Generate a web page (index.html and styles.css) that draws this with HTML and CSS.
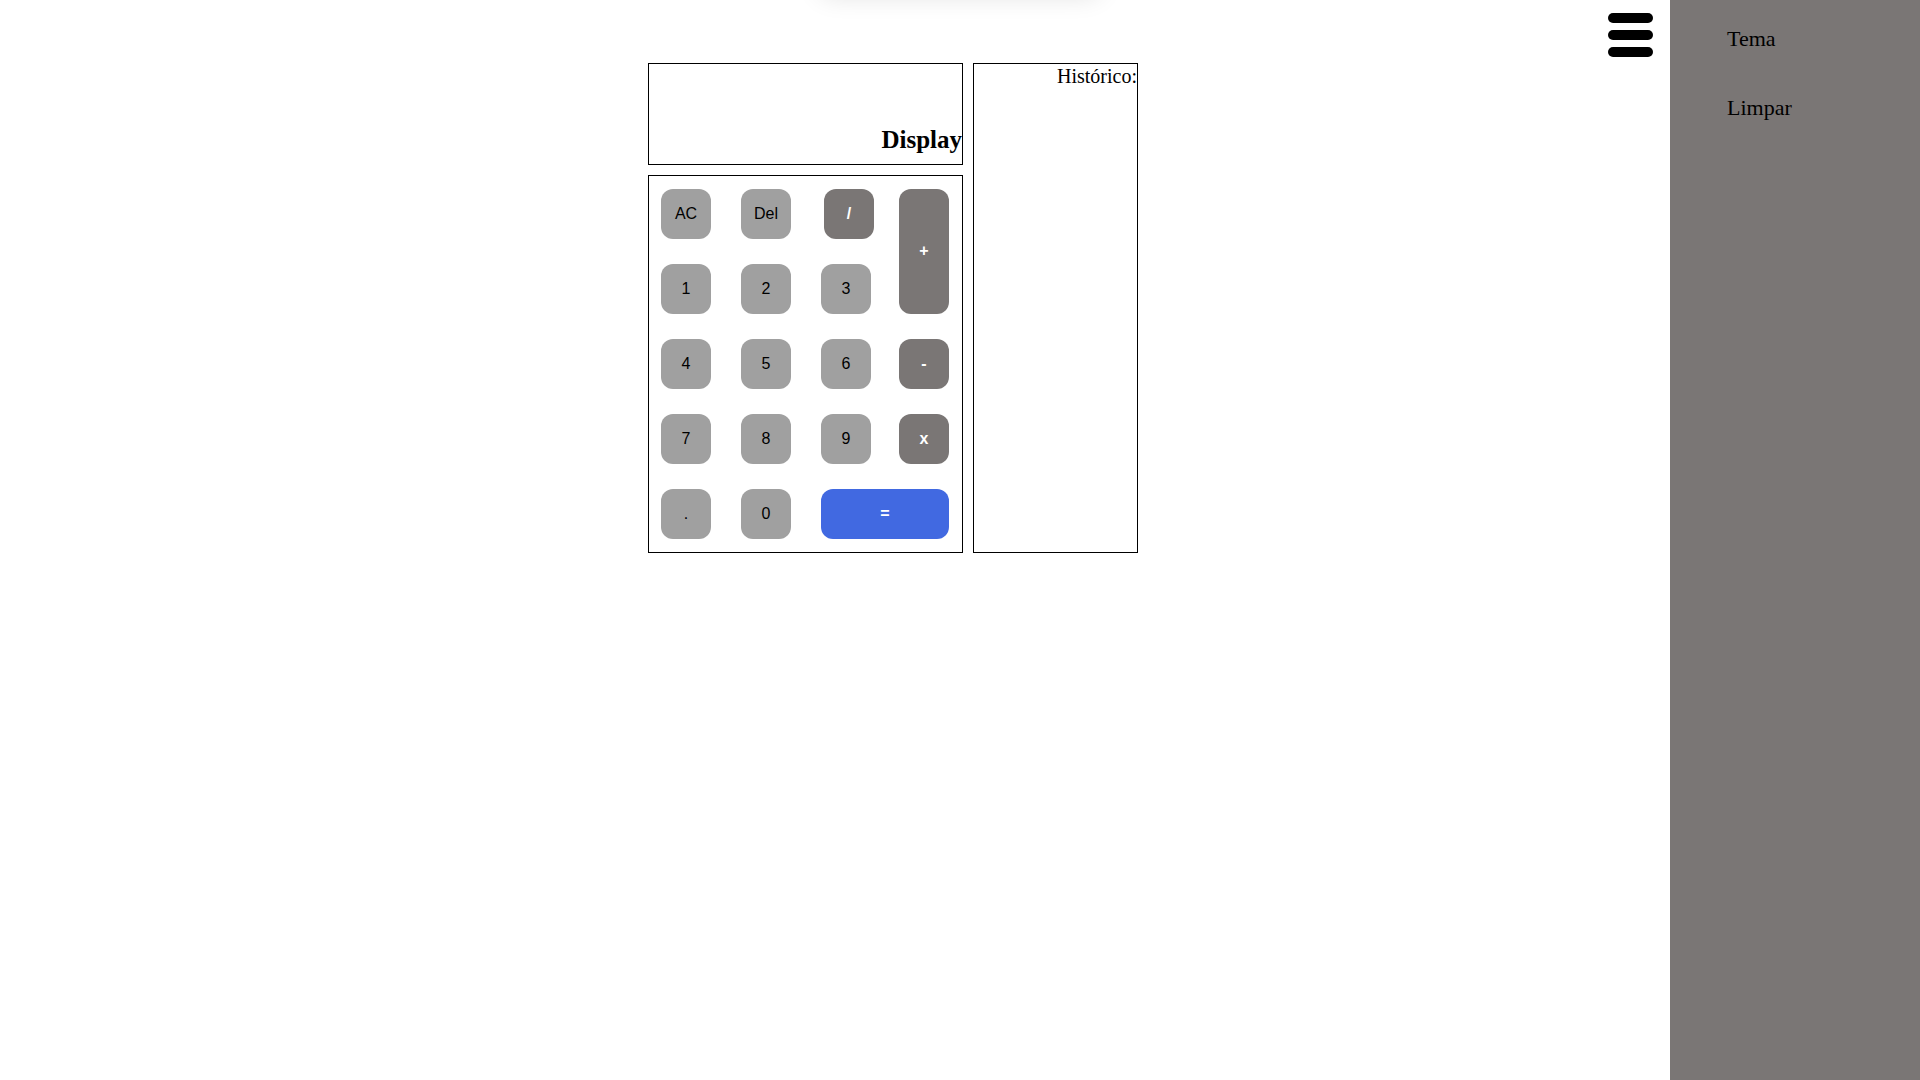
FILE: index.html
```html
<!DOCTYPE html>
<html lang="pt-BR">
  <head>
    <meta charset="UTF-8" />
    <meta name="viewport" content="width=device-width, initial-scale=1.0" />
    <title>Calculadora</title>
    <link rel="stylesheet" href="styles.css">
  </head>
  <body>
    <div class="toast"></div>

    <div class="app">
      <div class="calc">
        <div class="display">Display</div>
        <div class="keypad">
          <button class="key">AC</button>
          <button class="key">Del</button>
          <button class="key op slash">/</button>
          <button class="key op plus">+</button>
          <button class="key">1</button>
          <button class="key">2</button>
          <button class="key">3</button>
          <button class="key">4</button>
          <button class="key">5</button>
          <button class="key">6</button>
          <button class="key op">-</button>
          <button class="key">7</button>
          <button class="key">8</button>
          <button class="key">9</button>
          <button class="key op">x</button>
          <button class="key">.</button>
          <button class="key">0</button>
          <button class="key equals">=</button>
        </div>
      </div>
      <div class="history">Histórico:</div>
    </div>

    <div class="menu-toggle">
      <span></span>
      <span></span>
      <span></span>
    </div>

    <nav class="sidebar">
      <a class="sidebar-item">Tema</a>
      <a class="sidebar-item">Limpar</a>
    </nav>
  </body>
</html>
```

FILE: styles.css
```css
body {
  margin: 0;
  padding: 0;
  background-color: #fff;
  font-family: "Liberation Serif", "Times New Roman", serif;
}

/* aviso escondido acima da tela */
.toast {
  position: fixed;
  top: -60px;
  left: 50%;
  width: 280px;
  height: 56px;
  transform: translateX(-50%);
  background-color: #fff;
  border-radius: 10px;
  box-shadow: 0 0 26px rgba(0, 0, 0, 0.12);
}

.app {
  display: flex;
  gap: 10px;
  margin: 63px 0 0 648px;
}

.calc {
  display: flex;
  flex-direction: column;
  gap: 10px;
}

.display {
  width: 313px;
  height: 91px;
  padding-bottom: 9px;
  border: 1px solid #000;
  display: flex;
  flex-direction: column;
  justify-content: flex-end;
  align-items: flex-end;
  font-size: 25px;
  font-weight: bold;
  line-height: 28.75px;
}

.keypad {
  border: 1px solid #000;
  padding: 13px 13px 13px 12px;
  display: grid;
  grid-template-columns: 80px 80px 78px 50px;
  grid-auto-rows: 50px;
  row-gap: 25px;
}

.key {
  width: 50px;
  height: 50px;
  border: none;
  border-radius: 12px;
  background-color: #a0a0a0;
  color: #000;
  font-family: "Liberation Sans", Arial, sans-serif;
  font-size: 16px;
  padding: 0;
  cursor: pointer;
}

.key.op {
  background-color: #7a7675;
  color: #fff;
  font-weight: bold;
}

.key.slash {
  margin-left: 3px;
}

.key.plus {
  grid-column: 4;
  grid-row: 1 / span 2;
  height: 125px;
  padding-bottom: 2px;
}

.key.equals {
  grid-column: 3 / span 2;
  width: 128px;
  background-color: #4169e1;
  color: #fff;
  font-weight: bold;
}

.history {
  width: 163px;
  height: 487px;
  padding-top: 1px;
  border: 1px solid #000;
  text-align: right;
  font-size: 20px;
}

.menu-toggle {
  position: fixed;
  top: 13px;
  left: 1608px;
  display: flex;
  flex-direction: column;
  gap: 7px;
  cursor: pointer;
}

.menu-toggle span {
  display: block;
  width: 45px;
  height: 10px;
  border-radius: 5px;
  background-color: #000;
}

.sidebar {
  position: fixed;
  top: 0;
  right: 0;
  width: 250px;
  height: 100vh;
  padding-top: 4px;
  box-sizing: border-box;
  background-color: #7a7675;
}

.sidebar-item {
  display: block;
  padding: 22px 0 21px 57px;
  font-size: 22px;
  color: #000;
  cursor: pointer;
}
```
